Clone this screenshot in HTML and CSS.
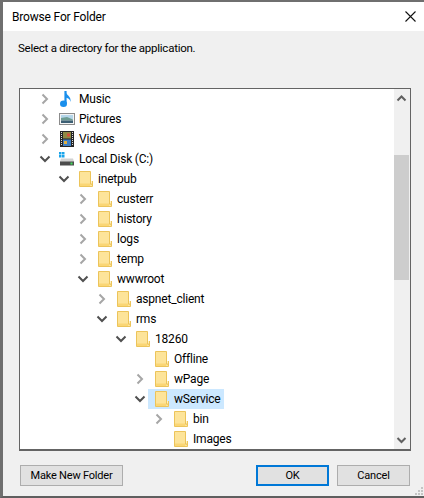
FILE: index.html
```html
<!DOCTYPE html>
<html lang="en">
<head>
    <meta charset="UTF-8">
    <title>Browse For Folder</title>
    <link rel="stylesheet" href="styles.css">
</head>
<body>
    <svg class="defs" width="0" height="0">
        <symbol id="folder" viewBox="0 0 16 16">
            <path d="M1.500 .5H12.500V13H14.500V15.500H1.500Z" fill="#fde49a" stroke="#ecc45a"/>
            <path d="M2 12.500H12V15H2Z" fill="#fad675"/>
            <path d="M12.500 10V13H14.500V10" fill="#fff1c0" stroke="#ecc45a"/>
        </symbol>
        <symbol id="right" viewBox="0 0 16 16">
            <path d="M5.500 3.500L10 8L5.500 12.500" fill="none" stroke="#a6a6a6" stroke-width="2"/>
        </symbol>
        <symbol id="down" viewBox="0 0 16 16">
            <path d="M3.500 5.500L8 10L12.500 5.500" fill="none" stroke="#505050" stroke-width="2"/>
        </symbol>
    </svg>

    <div class="dialog">
        <div class="titlebar">
            <span class="title">Browse For Folder</span>
            <svg class="close" width="11" height="11" viewBox="0 0 11 11">
                <path d="M.5 .5L10.500 10.500M10.500 .5L.5 10.500" stroke="#111" stroke-width="1.100"/>
            </svg>
        </div>
        <div class="content">
            <p class="prompt">Select a directory for the application.</p>
            <div class="tree">
                <div class="rows">
                    <div class="row lv0">
                        <svg class="arrow"><use href="#right"/></svg>
                        <svg class="icon" viewBox="0 0 16 16">
                            <path d="M6.500 0V13" stroke="#1a8fec" stroke-width="2.200"/>
                            <ellipse cx="4.500" cy="12.800" rx="3.500" ry="3.200" fill="#1a8fec"/>
                            <path d="M6 0C7 4 12.500 5 11.500 11C11 8 9 7 6 6.500Z" fill="#1a8fec"/>
                        </svg>
                        <span>Music</span>
                    </div>
                    <div class="row lv0">
                        <svg class="arrow"><use href="#right"/></svg>
                        <svg class="icon" viewBox="0 0 16 16">
                            <rect x=".5" y="2.500" width="15" height="11" fill="#f4f4f4" stroke="#8b8b8b"/>
                            <rect x="2" y="4" width="12" height="4" fill="#b5d6ea"/>
                            <path d="M2 7L8 6L14 8.500V9.500H2Z" fill="#6d9c92"/>
                            <rect x="2" y="9.500" width="12" height="2.500" fill="#3c5f74"/>
                        </svg>
                        <span>Pictures</span>
                    </div>
                    <div class="row lv0">
                        <svg class="arrow"><use href="#right"/></svg>
                        <svg class="icon" viewBox="0 0 16 16">
                            <rect x="1" y="0" width="14" height="16" fill="#262626"/>
                            <path d="M2.500 1V15M13.500 1V15" stroke="#ddd" stroke-dasharray="1 1"/>
                            <rect x="4" y="1" width="8" height="6.500" fill="#8f8a45"/>
                            <rect x="4" y="8.500" width="8" height="6.500" fill="#3f7fc4"/>
                            <rect x="8" y="2.500" width="3" height="3" fill="#d8503a"/>
                            <rect x="5" y="10" width="3" height="3" fill="#e0b040"/>
                        </svg>
                        <span>Videos</span>
                    </div>
                    <div class="row lv0">
                        <svg class="arrow"><use href="#down"/></svg>
                        <svg class="icon" viewBox="0 0 16 16">
                            <path d="M0 1H2.500V3.500H0ZM3 1H5.500V3.500H3ZM0 4H2.500V6.500H0ZM3 4H5.500V6.500H3Z" fill="#19a4ea"/>
                            <path d="M2 7.500H14L15 10.500H1Z" fill="#d2d2d2"/>
                            <rect x="1" y="10" width="14" height="4.500" fill="#4c4c4c"/>
                            <rect x="1" y="10" width="14" height="1" fill="#8f8f8f"/>
                            <rect x="11.500" y="11.500" width="2" height="2" fill="#3ede58"/>
                        </svg>
                        <span>Local Disk (C:)</span>
                    </div>
                    <div class="row lv1">
                        <svg class="arrow"><use href="#down"/></svg>
                        <svg class="icon"><use href="#folder"/></svg>
                        <span>inetpub</span>
                    </div>
                    <div class="row lv2">
                        <svg class="arrow"><use href="#right"/></svg>
                        <svg class="icon"><use href="#folder"/></svg>
                        <span>custerr</span>
                    </div>
                    <div class="row lv2">
                        <svg class="arrow"><use href="#right"/></svg>
                        <svg class="icon"><use href="#folder"/></svg>
                        <span>history</span>
                    </div>
                    <div class="row lv2">
                        <svg class="arrow"><use href="#right"/></svg>
                        <svg class="icon"><use href="#folder"/></svg>
                        <span>logs</span>
                    </div>
                    <div class="row lv2">
                        <svg class="arrow"><use href="#right"/></svg>
                        <svg class="icon"><use href="#folder"/></svg>
                        <span>temp</span>
                    </div>
                    <div class="row lv2">
                        <svg class="arrow"><use href="#down"/></svg>
                        <svg class="icon"><use href="#folder"/></svg>
                        <span>wwwroot</span>
                    </div>
                    <div class="row lv3">
                        <svg class="arrow"><use href="#right"/></svg>
                        <svg class="icon"><use href="#folder"/></svg>
                        <span>aspnet_client</span>
                    </div>
                    <div class="row lv3">
                        <svg class="arrow"><use href="#down"/></svg>
                        <svg class="icon"><use href="#folder"/></svg>
                        <span>rms</span>
                    </div>
                    <div class="row lv4">
                        <svg class="arrow"><use href="#down"/></svg>
                        <svg class="icon"><use href="#folder"/></svg>
                        <span>18260</span>
                    </div>
                    <div class="row lv5">
                        <svg class="arrow"></svg>
                        <svg class="icon"><use href="#folder"/></svg>
                        <span>Offline</span>
                    </div>
                    <div class="row lv5">
                        <svg class="arrow"><use href="#right"/></svg>
                        <svg class="icon"><use href="#folder"/></svg>
                        <span>wPage</span>
                    </div>
                    <div class="row lv5">
                        <svg class="arrow"><use href="#down"/></svg>
                        <div class="selected">
                            <svg class="icon"><use href="#folder"/></svg>
                            <span>wService</span>
                        </div>
                    </div>
                    <div class="row lv6">
                        <svg class="arrow"><use href="#right"/></svg>
                        <svg class="icon"><use href="#folder"/></svg>
                        <span>bin</span>
                    </div>
                    <div class="row lv6">
                        <svg class="arrow"></svg>
                        <svg class="icon"><use href="#folder"/></svg>
                        <span>Images</span>
                    </div>
                </div>
                <div class="scrollbar">
                    <svg class="sb-btn" width="15" height="17" viewBox="0 0 15 17">
                        <path d="M3.500 11.500L7.500 7.500L11.500 11.500" fill="none" stroke="#606060" stroke-width="2"/>
                    </svg>
                    <div class="thumb"></div>
                    <svg class="sb-btn sb-end" width="15" height="17" viewBox="0 0 15 17">
                        <path d="M3.500 6L7.500 10L11.500 6" fill="none" stroke="#606060" stroke-width="2"/>
                    </svg>
                </div>
            </div>
            <div class="buttons">
                <button class="btn btn-new">Make New Folder</button>
                <button class="btn btn-ok">OK</button>
                <button class="btn">Cancel</button>
            </div>
            <svg class="grip" width="9" height="9" viewBox="0 0 9 9">
                <path d="M6 0h2v2H6zM3 3h2v2H3zM6 3h2v2H6zM0 6h2v2H0zM3 6h2v2H3zM6 6h2v2H6z" fill="#c4c4c4"/>
            </svg>
        </div>
    </div>
</body>
</html>
```

FILE: styles.css
```css
*{
    margin: 0;
    padding: 0;
    box-sizing: border-box;
}
html,body{
    height: 100%;
    overflow: hidden;
}
body{
    font-family: Roboto, sans-serif;
    font-size: 12px;
    color: #000;
    background-color: #f0f0f0;
}
.defs{
    position: absolute;
}
.dialog{
    height: 498px;
    display: flex;
    flex-direction: column;
    border-top: 2px solid #6f6f6f;
    border-bottom: 2px solid #5f5f5f;
    border-left: 3px solid #6f6f6f;
}
.titlebar{
    height: 29px;
    background-color: #fff;
    display: flex;
    align-items: center;
    justify-content: space-between;
    padding: 0 8px 0 9px;
}
.title{
    letter-spacing: -0.18px;
}
.content{
    flex: 1;
    position: relative;
    padding: 0 13px 0 16px;
    display: flex;
    flex-direction: column;
}
.prompt{
    height: 16px;
    line-height: 16px;
    margin: 9px 0 0 -1px;
    font-size: 11.5px;
    letter-spacing: -0.25px;
}
.tree{
    margin-top: 32px;
    height: 363px;
    background-color: #fff;
    border: 1px solid #646464;
    border-bottom-width: 2px;
    display: flex;
}
.rows{
    flex: 1;
    overflow: hidden;
}
.row{
    height: 20px;
    display: flex;
    align-items: center;
    white-space: nowrap;
    letter-spacing: -0.2px;
}
.lv0{ padding-left: 17px; }
.lv1{ padding-left: 36px; }
.lv2{ padding-left: 55px; }
.lv3{ padding-left: 74px; }
.lv4{ padding-left: 93px; }
.lv5{ padding-left: 112px; }
.lv6{ padding-left: 131px; }
.arrow{
    width: 16px;
    height: 16px;
    margin-right: 6px;
    flex-shrink: 0;
}
.icon{
    width: 16px;
    height: 16px;
    margin-right: 4px;
    flex-shrink: 0;
}
.selected{
    height: 20px;
    display: flex;
    align-items: center;
    background-color: #cce8ff;
    padding-right: 4px;
    margin-left: -6px;
    padding-left: 6px;
}
.scrollbar{
    width: 16px;
    background-color: #f0f0f0;
    display: flex;
    flex-direction: column;
}
.sb-btn{
    flex-shrink: 0;
}
.thumb{
    width: 15px;
    height: 125px;
    margin-top: 49px;
    background-color: #cdcdcd;
}
.sb-end{
    margin-top: auto;
}
.buttons{
    display: flex;
    margin-top: 14px;
    padding-left: 1px;
}
.btn{
    width: 73px;
    height: 21px;
    font-family: inherit;
    font-size: 11px;
    letter-spacing: -0.2px;
    color: #000;
    background-color: #e1e1e1;
    border: 1px solid #adadad;
    margin-left: 8px;
    padding: 0;
}
.btn-new{
    width: 103px;
    margin-left: 0;
    margin-right: 125px;
}
.btn-ok{
    border: 2px solid #0078d7;
    margin-left: 8px;
}
.grip{
    position: absolute;
    right: 0;
    bottom: 0;
}
```
